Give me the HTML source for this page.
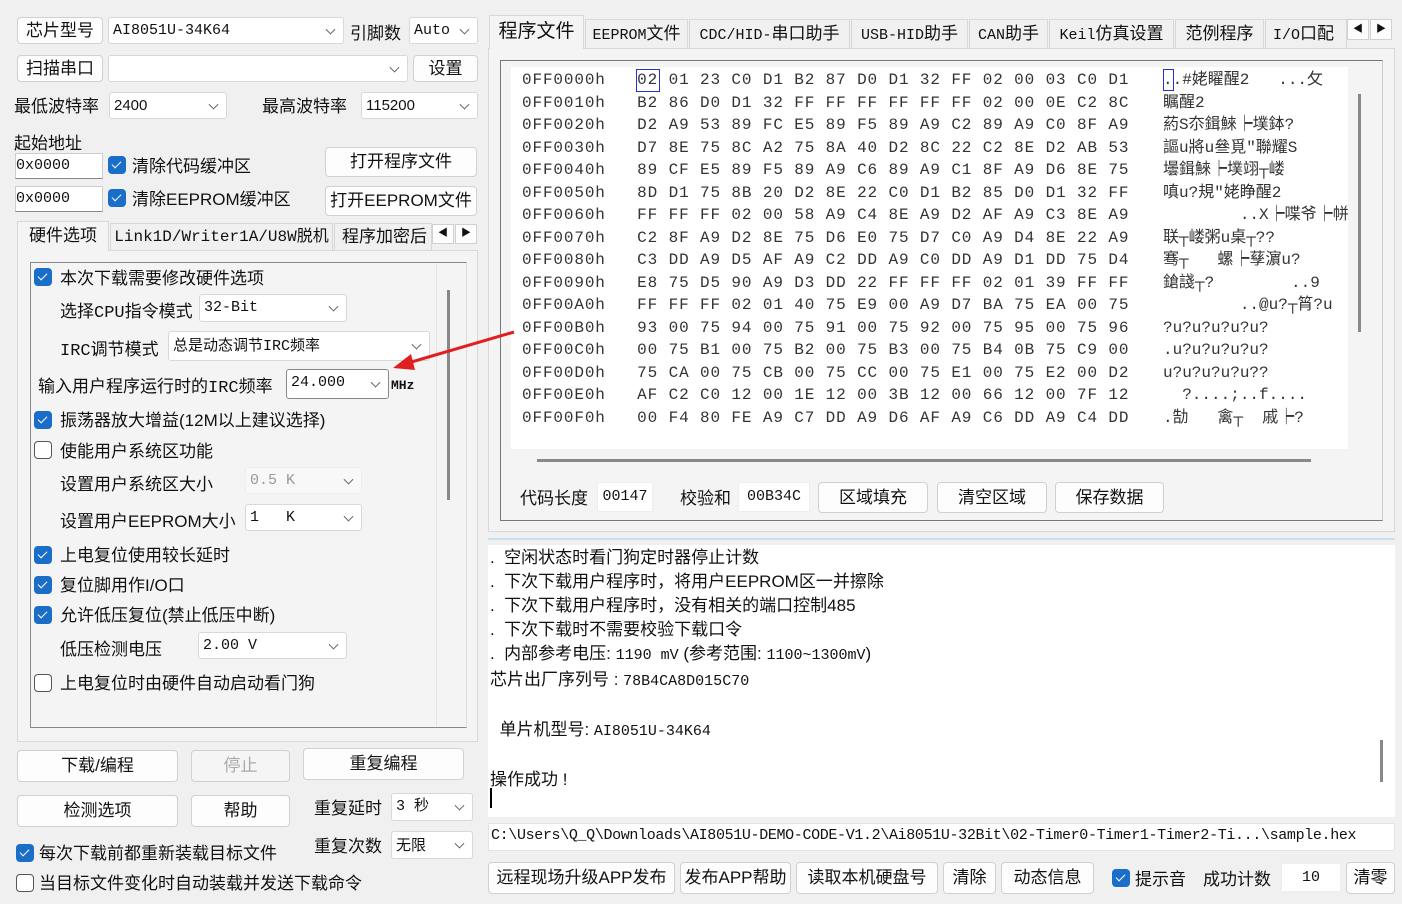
<!DOCTYPE html>
<html><head><meta charset="utf-8"><style>
*{box-sizing:border-box;margin:0;padding:0}
body{width:1402px;height:904px;background:#f0f0f0;position:relative;overflow:hidden;font-family:"Liberation Sans","Noto Sans CJK SC",sans-serif;font-size:17px;color:#111}
.a{position:absolute;white-space:nowrap}
.btn{position:absolute;background:#fdfdfd;border:1px solid #d0d0d0;border-radius:4px;text-align:center;font-size:17px;line-height:1}
.cb{position:absolute;background:#fff;border:1px solid #d8d8d8;border-radius:3px;font-size:15px;padding-left:4px;font-family:"Liberation Mono","Noto Sans CJK SC",monospace}
.cb::after{content:"";position:absolute;right:9px;top:50%;width:6px;height:6px;border-right:1.3px solid #666;border-bottom:1.3px solid #666;transform:translateY(-70%) rotate(45deg)}
.chk{position:absolute;width:18px;height:18px;border-radius:4px;background:#1a6ec8}
.chk::after{content:"";position:absolute;left:6px;top:3px;width:4px;height:8px;border-right:1.6px solid #fff;border-bottom:1.6px solid #fff;transform:rotate(45deg)}
.unc{position:absolute;width:18px;height:18px;border-radius:4px;border:1.3px solid #555;background:#fff}
.in{position:absolute;background:#fff;border:1px solid #ccc;border-bottom:1px solid #888;font-family:"Liberation Mono",monospace;font-size:15px}
.tab{position:absolute;border:1px solid #d8d8d8;border-bottom:none;background:#f0f0f0;text-align:center;font-size:17px}
.hex{position:absolute;left:522px;font-family:"Liberation Mono",monospace;font-size:16px;color:#333;white-space:pre}
.mono{font-family:"Liberation Mono","Noto Sans CJK SC",monospace}
</style></head><body>
<!-- left top -->
<div class="btn" style="left:17px;top:17px;width:86px;height:27px;line-height:25px">芯片型号</div>
<div class="cb" style="left:108px;top:17px;width:236px;height:27px;line-height:25px">AI8051U-34K64</div>
<div class="a" style="left:350px;top:19px">引脚数</div>
<div class="cb" style="left:409px;top:17px;width:69px;height:27px;line-height:25px">Auto</div>
<div class="btn" style="left:17px;top:55px;width:86px;height:27px;line-height:25px">扫描串口</div>
<div class="cb" style="left:108px;top:55px;width:300px;height:27px"></div>
<div class="btn" style="left:413px;top:55px;width:65px;height:27px;line-height:25px">设置</div>
<div class="a" style="left:14px;top:92px">最低波特率</div>
<div class="cb" style="left:109px;top:92px;width:118px;height:27px;line-height:25px;font-family:'Liberation Sans'">2400</div>
<div class="a" style="left:262px;top:92px">最高波特率</div>
<div class="cb" style="left:361px;top:92px;width:117px;height:27px;line-height:25px;font-family:'Liberation Sans'">115200</div>
<div class="a" style="left:14px;top:129px">起始地址</div>
<div class="in" style="left:15px;top:153px;width:88px;height:26px;line-height:24px">0x0000</div>
<div class="chk" style="left:108px;top:156px"></div><div class="a" style="left:132px;top:152px">清除代码缓冲区</div>
<div class="btn" style="left:325px;top:147px;width:152px;height:30px;line-height:28px">打开程序文件</div>
<div class="in" style="left:15px;top:186px;width:88px;height:26px;line-height:24px">0x0000</div>
<div class="chk" style="left:108px;top:189px"></div><div class="a" style="left:132px;top:185px">清除EEPROM缓冲区</div>
<div class="btn" style="left:325px;top:186px;width:152px;height:30px;line-height:28px">打开EEPROM文件</div>
<!-- left tabs -->
<div style="position:absolute;left:17px;top:250px;width:461px;height:492px;border:1px solid #d8d8d8;background:#f4f4f4"></div>
<div class="tab" style="left:17px;top:221px;width:92px;height:30px;line-height:28px;background:#f4f4f4">硬件选项</div>
<div class="tab" style="left:110px;top:223px;width:223px;height:27px;line-height:26px;font-size:16px"><span class="mono">Link1D/Writer1A/U8W</span>脱机</div>
<div class="tab" style="left:334px;top:223px;width:98px;height:27px;line-height:26px;overflow:hidden;text-align:left;padding-left:7px">程序加密后</div>
<div class="btn" style="left:432px;top:224px;width:22px;height:20px;border-radius:0;font-size:10px;line-height:18px">◀</div>
<div class="btn" style="left:455px;top:224px;width:22px;height:20px;border-radius:0;font-size:10px;line-height:18px">▶</div>
<div style="position:absolute;left:30px;top:262px;width:437px;height:466px;border:1px solid #888;border-right-color:#ddd;border-bottom-color:#888"></div>
<div style="position:absolute;left:447px;top:290px;width:3px;height:210px;background:#888"></div>
<div style="position:absolute;left:436px;top:264px;width:1px;height:462px;background:#e4e4e4"></div>
<div class="chk" style="left:34px;top:268px"></div><div class="a" style="left:60px;top:264px">本次下载需要修改硬件选项</div>
<div class="a" style="left:60px;top:297px">选择<span class="mono">CPU</span>指令模式</div>
<div class="cb" style="left:199px;top:294px;width:148px;height:28px;line-height:26px">32-Bit</div>
<div class="a" style="left:60px;top:335px"><span class="mono">IRC</span>调节模式</div>
<div class="cb" style="left:168px;top:331px;width:262px;height:30px;line-height:28px;font-family:'Liberation Sans','Noto Sans CJK SC'">总是动态调节<span class="mono">IRC</span>频率</div>
<div class="a" style="left:38px;top:372px">输入用户程序运行时的<span class="mono">IRC</span>频率</div>
<div class="cb" style="left:286px;top:369px;width:103px;height:30px;line-height:26px;border-color:#888">24.000</div>
<div class="a mono" style="left:391px;top:378px;font-size:13px;font-weight:bold">MHz</div>
<div class="chk" style="left:34px;top:411px"></div><div class="a" style="left:60px;top:406px">振荡器放大增益(12M以上建议选择)</div>
<div class="unc" style="left:34px;top:441px"></div><div class="a" style="left:60px;top:437px">使能用户系统区功能</div>
<div class="a" style="left:60px;top:470px">设置用户系统区大小</div>
<div class="cb" style="left:245px;top:467px;width:117px;height:27px;line-height:25px;color:#999;border-color:#eee;background:#f8f8f8">0.5 K</div>
<div class="a" style="left:60px;top:507px">设置用户EEPROM大小</div>
<div class="cb" style="left:245px;top:504px;width:117px;height:27px;line-height:25px">1&nbsp;&nbsp;&nbsp;K</div>
<div class="chk" style="left:34px;top:546px"></div><div class="a" style="left:60px;top:541px">上电复位使用较长延时</div>
<div class="chk" style="left:34px;top:576px"></div><div class="a" style="left:60px;top:571px">复位脚用作I/O口</div>
<div class="chk" style="left:34px;top:606px"></div><div class="a" style="left:60px;top:601px">允许低压复位(禁止低压中断)</div>
<div class="a" style="left:60px;top:635px">低压检测电压</div>
<div class="cb" style="left:198px;top:632px;width:149px;height:27px;line-height:25px">2.00 V</div>
<div class="unc" style="left:34px;top:674px"></div><div class="a" style="left:60px;top:669px">上电复位时由硬件自动启动看门狗</div>
<!-- left bottom -->
<div class="btn" style="left:17px;top:750px;width:161px;height:32px;line-height:30px">下载/编程</div>
<div class="btn" style="left:191px;top:750px;width:99px;height:32px;line-height:30px;color:#aaa;background:#f5f5f5">停止</div>
<div class="btn" style="left:303px;top:748px;width:161px;height:32px;line-height:30px">重复编程</div>
<div class="btn" style="left:17px;top:795px;width:161px;height:32px;line-height:30px">检测选项</div>
<div class="btn" style="left:191px;top:795px;width:99px;height:32px;line-height:30px">帮助</div>
<div class="a" style="left:314px;top:794px">重复延时</div>
<div class="cb" style="left:391px;top:793px;width:82px;height:28px;line-height:26px">3 秒</div>
<div class="a" style="left:314px;top:832px">重复次数</div>
<div class="cb" style="left:391px;top:831px;width:82px;height:28px;line-height:26px;font-family:'Noto Sans CJK SC'">无限</div>
<div class="chk" style="left:16px;top:844px"></div><div class="a" style="left:39px;top:839px">每次下载前都重新装载目标文件</div>
<div class="unc" style="left:16px;top:874px"></div><div class="a" style="left:39px;top:869px">当目标文件变化时自动装载并发送下载命令</div>
<!-- right tabs -->
<div style="position:absolute;left:488px;top:48px;width:907px;height:484px;border:1px solid #d8d8d8;background:#f4f4f4"></div>
<div class="tab" style="left:489px;top:15px;width:95px;height:34px;line-height:32px;background:#f4f4f4;font-size:19px">程序文件</div>
<div class="tab" style="left:585px;top:19px;width:103px;height:29px;line-height:28px"><span class="mono" style="font-size:15px">EEPROM</span>文件</div>
<div class="tab" style="left:689px;top:19px;width:161px;height:29px;line-height:28px"><span class="mono" style="font-size:15px">CDC/HID-</span>串口助手</div>
<div class="tab" style="left:851px;top:19px;width:117px;height:29px;line-height:28px"><span class="mono" style="font-size:15px">USB-HID</span>助手</div>
<div class="tab" style="left:969px;top:19px;width:79px;height:29px;line-height:28px"><span class="mono" style="font-size:15px">CAN</span>助手</div>
<div class="tab" style="left:1049px;top:19px;width:125px;height:29px;line-height:28px"><span class="mono" style="font-size:15px">Keil</span>仿真设置</div>
<div class="tab" style="left:1175px;top:19px;width:89px;height:29px;line-height:28px">范例程序</div>
<div class="tab" style="left:1265px;top:19px;width:82px;height:29px;line-height:28px;overflow:hidden;text-align:left;padding-left:7px"><span class="mono" style="font-size:15px">I/O</span>口配置</div>
<div class="btn" style="left:1347px;top:19px;width:22px;height:21px;border-radius:0;font-size:10px;line-height:19px">◀</div>
<div class="btn" style="left:1370px;top:19px;width:22px;height:21px;border-radius:0;font-size:10px;line-height:19px">▶</div>
<div style="position:absolute;left:500px;top:60px;width:883px;height:461px;border:1px solid #777;border-right-color:#ccc"></div>
<div style="position:absolute;left:511px;top:67px;width:837px;height:382px;background:#fff"></div>
<div style="position:absolute;left:1358px;top:94px;width:3px;height:238px;background:#888"></div>
<div style="position:absolute;left:537px;top:459px;width:774px;height:3px;background:#888"></div>
<div style="position:absolute;left:636px;top:69px;width:24px;height:23px;border:1.5px solid #2233cc"></div>
<div class="hex" style="top:69px;line-height:22.5px;letter-spacing:0.87px">0FF0000h   02 01 23 C0 D1 B2 87 D0 D1 32 FF 02 00 03 C0 D1
0FF0010h   B2 86 D0 D1 32 FF FF FF FF FF FF 02 00 0E C2 8C
0FF0020h   D2 A9 53 89 FC E5 89 F5 89 A9 C2 89 A9 C0 8F A9
0FF0030h   D7 8E 75 8C A2 75 8A 40 D2 8C 22 C2 8E D2 AB 53
0FF0040h   89 CF E5 89 F5 89 A9 C6 89 A9 C1 8F A9 D6 8E 75
0FF0050h   8D D1 75 8B 20 D2 8E 22 C0 D1 B2 85 D0 D1 32 FF
0FF0060h   FF FF FF 02 00 58 A9 C4 8E A9 D2 AF A9 C3 8E A9
0FF0070h   C2 8F A9 D2 8E 75 D6 E0 75 D7 C0 A9 D4 8E 22 A9
0FF0080h   C3 DD A9 D5 AF A9 C2 DD A9 C0 DD A9 D1 DD 75 D4
0FF0090h   E8 75 D5 90 A9 D3 DD 22 FF FF FF 02 01 39 FF FF
0FF00A0h   FF FF FF 02 01 40 75 E9 00 A9 D7 BA 75 EA 00 75
0FF00B0h   93 00 75 94 00 75 91 00 75 92 00 75 95 00 75 96
0FF00C0h   00 75 B1 00 75 B2 00 75 B3 00 75 B4 0B 75 C9 00
0FF00D0h   75 CA 00 75 CB 00 75 CC 00 75 E1 00 75 E2 00 D2
0FF00E0h   AF C2 C0 12 00 1E 12 00 3B 12 00 66 12 00 7F 12
0FF00F0h   00 F4 80 FE A9 C7 DD A9 D6 AF A9 C6 DD A9 C4 DD</div>
<div class="hex" style="left:1163px;top:69px;line-height:22.5px;font-family:'Liberation Mono','Noto Sans CJK SC',monospace">..#姥矅醒2   ...攵
瞩醒2
葯S夵鍓鯠┝墣鉢?
謳u將u叄覓"聯耀S
壜鍓鯠┝墣翊┬嵝
嗔u?規"姥睁醒2
        ..X┝喋爷┝帡
联┬嵝粥u桌┬??
骞┬   螺┝孶濵u?
鎗諓┬?        ..9
        ..@u?┬筲?u
?u?u?u?u?u?
.u?u?u?u?u?
u?u?u?u?u??
  ?....;..f....
.勂   禽┬  戚┝?</div>
<div style="position:absolute;left:1163px;top:69px;width:11px;height:22px;border:1.5px solid #2233cc"></div>
<div class="a" style="left:520px;top:484px">代码长度</div>
<div class="in" style="left:597px;top:482px;width:56px;height:30px;line-height:28px;text-align:center;border-color:#eee">00147</div>
<div class="a" style="left:680px;top:484px">校验和</div>
<div class="in" style="left:738px;top:482px;width:72px;height:30px;line-height:28px;text-align:center;border-color:#eee">00B34C</div>
<div class="btn" style="left:818px;top:482px;width:110px;height:31px;line-height:29px">区域填充</div>
<div class="btn" style="left:937px;top:482px;width:110px;height:31px;line-height:29px">清空区域</div>
<div class="btn" style="left:1055px;top:482px;width:109px;height:31px;line-height:29px">保存数据</div>
<div style="position:absolute;left:488px;top:538px;width:907px;height:2px;background:#c8e0f0"></div>
<!-- log -->
<div style="position:absolute;left:488px;top:545px;width:907px;height:272px;background:#fff"></div>
<div style="position:absolute;left:1380px;top:740px;width:3px;height:42px;background:#888"></div>
<div class="a" style="left:490px;top:546px;line-height:24px;font-size:17px">.&nbsp;&nbsp;空闲状态时看门狗定时器停止计数<br>.&nbsp;&nbsp;下次下载用户程序时，将用户EEPROM区一并擦除<br>.&nbsp;&nbsp;下次下载用户程序时，没有相关的端口控制485<br>.&nbsp;&nbsp;下次下载时不需要校验下载口令<br>.&nbsp;&nbsp;内部参考电压: <span class="mono" style="font-size:15px">1190 mV</span> (参考范围: <span class="mono" style="font-size:15px">1100~1300mV</span>)<br>芯片出厂序列号 : <span class="mono" style="font-size:15px">78B4CA8D015C70</span><br><br>&nbsp;&nbsp;单片机型号: <span class="mono" style="font-size:15px">AI8051U-34K64</span><br><br>操作成功 !</div>
<div style="position:absolute;left:490px;top:788px;width:2px;height:20px;background:#000"></div>
<div style="position:absolute;left:488px;top:823px;width:907px;height:28px;background:#fff;border:1px solid #e4e4e4"></div>
<div class="a mono" style="left:491px;top:827px;font-size:15px;letter-spacing:-0.35px">C:\Users\Q_Q\Downloads\AI8051U-DEMO-CODE-V1.2\Ai8051U-32Bit\02-Timer0-Timer1-Timer2-Ti...\sample.hex</div>
<div class="btn" style="left:488px;top:862px;width:187px;height:32px;line-height:30px">远程现场升级APP发布</div>
<div class="btn" style="left:680px;top:862px;width:111px;height:32px;line-height:30px">发布APP帮助</div>
<div class="btn" style="left:796px;top:862px;width:142px;height:32px;line-height:30px">读取本机硬盘号</div>
<div class="btn" style="left:943px;top:862px;width:53px;height:32px;line-height:30px">清除</div>
<div class="btn" style="left:1001px;top:862px;width:93px;height:32px;line-height:30px">动态信息</div>
<div class="chk" style="left:1112px;top:869px"></div><div class="a" style="left:1135px;top:865px">提示音</div>
<div class="a" style="left:1203px;top:865px">成功计数</div>
<div class="in" style="left:1281px;top:863px;width:60px;height:29px;line-height:27px;text-align:center;border-color:#eee">10</div>
<div class="btn" style="left:1346px;top:862px;width:49px;height:32px;line-height:30px">清零</div>
<!-- arrow -->
<svg style="position:absolute;left:0;top:0" width="1402" height="904"><line x1="514" y1="332" x2="408" y2="363" stroke="#e02020" stroke-width="3"/><polygon points="393,368 411,354 415,370" fill="#e02020"/></svg>
</body></html>
